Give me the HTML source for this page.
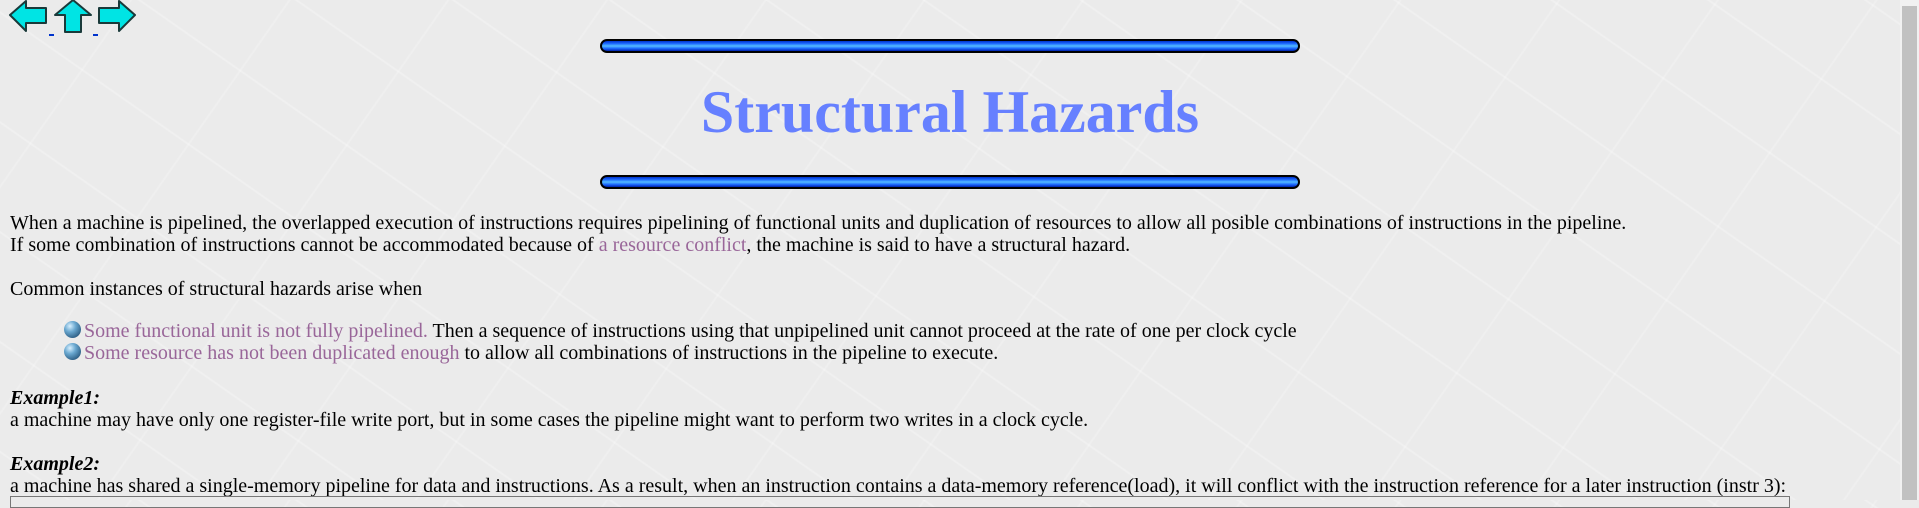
<!DOCTYPE html>
<html><head><meta charset="utf-8"><style>
html,body{margin:0;padding:0;}
body{width:1919px;height:500px;overflow:hidden;position:relative;
background:#ebebeb;
background-image:
 repeating-linear-gradient(35deg, rgba(255,255,255,0) 0 38px, rgba(255,255,255,.25) 39px 40px, rgba(255,255,255,0) 41px 90px),
 repeating-linear-gradient(-55deg, rgba(255,255,255,0) 0 60px, rgba(255,255,255,.2) 61px 62px, rgba(255,255,255,0) 63px 130px);
font-family:"Liberation Serif",serif;font-size:20px;color:#000;}
.l{position:absolute;left:10px;white-space:nowrap;line-height:22px;}
a{color:#996699;text-decoration:none}
.bar{position:absolute;left:600px;width:700px;height:14px;box-sizing:border-box;border:2px solid #000;border-radius:7px;
background:linear-gradient(#0033cc 0,#1a66ff 25%,#55bbff 50%,#1a66ff 75%,#0022aa 100%);}
h1{position:absolute;left:0;width:1900px;top:77px;margin:0;text-align:center;font-family:"Liberation Serif",serif;font-weight:bold;font-size:60px;color:#6680ff;line-height:70px;}
.ball{display:inline-block;width:17px;height:17px;border-radius:50%;vertical-align:-1px;margin-right:3px;
background:radial-gradient(circle at 35% 30%,#d8f0ff 0,#6aa8d0 35%,#2a5a80 80%,#1a3550 100%);}
.sb{position:absolute;left:1900px;top:0;width:19px;height:500px;background:#f1f1f1}
.th{position:absolute;left:1902px;top:6px;width:15px;height:494px;background:#c1c1c1}
.tb{position:absolute;left:10px;top:496px;width:1778px;height:10px;border:1px solid #777;}
</style></head><body>
<svg style="position:absolute;left:8px;top:0" width="130" height="36" viewBox="0 0 130 36">
<g fill="#00e4e4" stroke="#1a3a3a" stroke-width="2" stroke-linejoin="round">
<path d="M2 15 L18 1 L18 8 L38 8 L38 23 L18 23 L18 31 Z"/>
<path d="M65 0 L83 15 L73 15 L73 32 L57 32 L57 15 L47 15 Z"/>
<path d="M127 15 L111 1 L111 8 L91 8 L91 23 L111 23 L111 31 Z"/>
</g>
<rect x="41" y="34" width="5" height="2" fill="#0033cc"/>
<rect x="85" y="34" width="5" height="2" fill="#0033cc"/>
</svg>
<div class="bar" style="top:39px"></div>
<h1>Structural Hazards</h1>
<div class="bar" style="top:175px"></div>
<div class="l" style="top:212px">When a machine is pipelined, the overlapped execution of instructions requires pipelining of functional units and duplication of resources to allow all posible combinations of instructions in the pipeline.</div>
<div class="l" style="top:234px">If some combination of instructions cannot be accommodated because of <a>a resource conflict</a>, the machine is said to have a structural hazard.</div>
<div class="l" style="top:278px">Common instances of structural hazards arise when</div>
<div class="l" style="top:320px;left:64px"><span class="ball"></span><a>Some functional unit is not fully pipelined.</a> Then a sequence of instructions using that unpipelined unit cannot proceed at the rate of one per clock cycle</div>
<div class="l" style="top:342px;left:64px"><span class="ball"></span><a>Some resource has not been duplicated enough</a> to allow all combinations of instructions in the pipeline to execute.</div>
<div class="l" style="top:387px"><b><i>Example1:</i></b></div>
<div class="l" style="top:409px">a machine may have only one register-file write port, but in some cases the pipeline might want to perform two writes in a clock cycle.</div>
<div class="l" style="top:453px"><b><i>Example2:</i></b></div>
<div class="l" style="top:475px">a machine has shared a single-memory pipeline for data and instructions. As a result, when an instruction contains a data-memory reference(load), it will conflict with the instruction reference for a later instruction (instr 3):</div>
<div class="tb"></div>
<div class="sb"></div><div class="th"></div>
</body></html>
